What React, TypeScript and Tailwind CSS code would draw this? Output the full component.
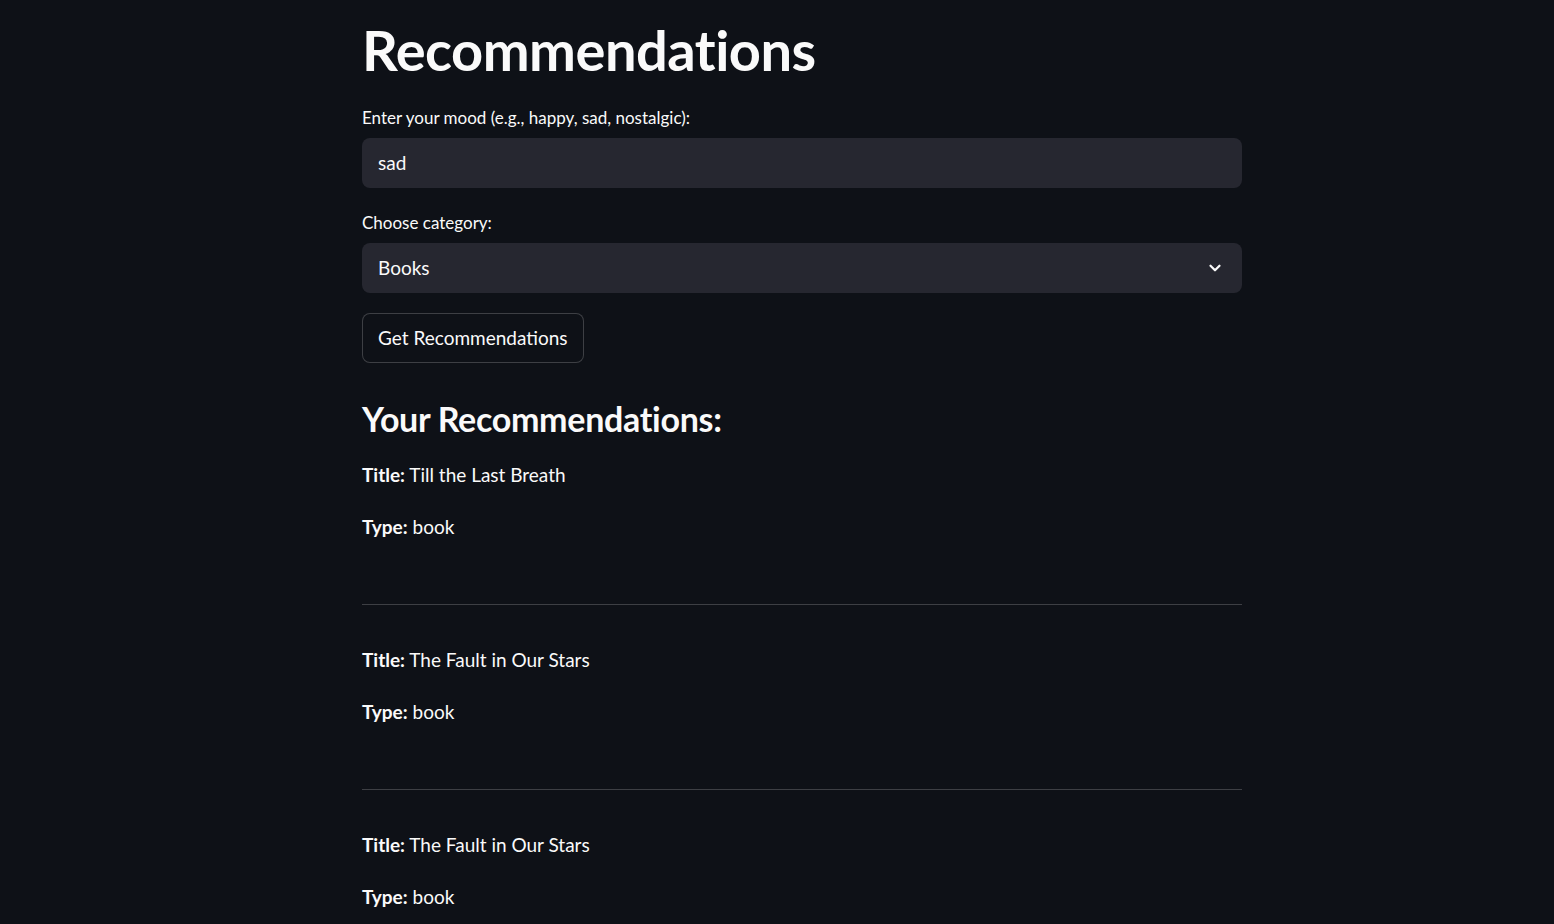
import { ChevronDown } from "lucide-react";

const items = [
  { title: "Till the Last Breath", type: "book" },
  { title: "The Fault in Our Stars", type: "book" },
  { title: "The Fault in Our Stars", type: "book" },
];

export default function App() {
  return (
    <div
      className="min-h-[924px] bg-[#0e1117] text-[#fafafa]"
      style={{ fontFamily: "Lato, 'Noto Sans', sans-serif" }}
    >
      <div className="ml-[362px] w-[880px] pt-[20px] pb-10">
        <h1 className="text-[56px] font-bold leading-[60px] tracking-[-0.5px]">Recommendations</h1>

        <label className="mt-[28px] block text-[17px] leading-[20px]">
          Enter your mood (e.g., happy, sad, nostalgic):
        </label>
        <div className="mt-[10px] flex h-[50px] items-center rounded-lg bg-[#262730] px-4 text-[19px]">
          sad
        </div>

        <label className="mt-[25px] block text-[17px] leading-[20px]">Choose category:</label>
        <div className="mt-[10px] flex h-[50px] items-center justify-between rounded-lg bg-[#262730] pl-4 pr-[18px] text-[19px]">
          <span>Books</span>
          <ChevronDown size={18} strokeWidth={3} />
        </div>

        <button className="mt-[20px] flex h-[50px] items-center rounded-lg border border-[#fafafa33] bg-[#0e1117] px-[15px] text-[19px]">
          Get Recommendations
        </button>

        <h3 className="mt-[34px] text-[34px] font-bold leading-[44px] tracking-[-0.3px]">Your Recommendations:</h3>

        <div className="mt-[20px]">
          {items.map((it, i) => (
            <div key={i}>
              {i > 0 && <div className="mt-[63px] mb-[41px] h-px bg-[#fafafa33]" />}
              <p className="text-[19px] leading-[28px]">
                <b>Title:</b> {it.title}
              </p>
              <p className="mt-[24px] text-[19px] leading-[28px]">
                <b>Type:</b> {it.type}
              </p>
            </div>
          ))}
        </div>
      </div>
    </div>
  );
}
